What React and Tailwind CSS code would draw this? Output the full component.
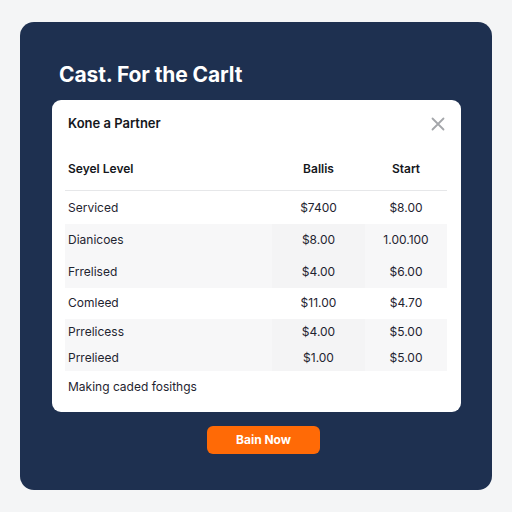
import React from 'react'

const rows = [
  { name: 'Serviced', a: '$7400', b: '$8.00' },
  { name: 'Dianicoes', a: '$8.00', b: '1.00.100' },
  { name: 'Frrelised', a: '$4.00', b: '$6.00' },
  { name: 'Comleed', a: '$11.00', b: '$4.70' },
]

const tight = [
  { name: 'Prrelicess', a: '$4.00', b: '$5.00' },
  { name: 'Prrelieed', a: '$1.00', b: '$5.00' },
]

function Row({ r, h, shaded, extra = '' }) {
  return (
    <div className={`grid grid-cols-[207px_93px_82px] items-center text-[12px] text-[#1f2430] ${h} ${extra}`}>
      <span className="pl-[3px]">{r.name}</span>
      <span className={`text-center h-full flex items-center justify-center ${shaded ? 'bg-[#f4f4f5]' : ''}`}>{r.a}</span>
      <span className="text-center">{r.b}</span>
    </div>
  )
}

export default function App() {
  return (
    <div className="w-[512px] h-[512px] bg-[#f4f5f6] pt-[22px] pl-[20px]" style={{ fontFamily: 'Inter, "Open Sans", sans-serif' }}>
      <div className="w-[472px] h-[468px] rounded-[14px] bg-[#1e3050] pt-[42px] px-[32px] flex flex-col">
        <h1 className="text-white text-[21px] font-bold leading-none tracking-[-0.1px] pl-[7px]">Cast. For the Carlt</h1>

        <div className="mt-[15px] w-[409px] h-[312px] bg-white rounded-[9px] pt-[14px] pl-[13px] pr-[14px] flex flex-col">
          <div className="flex items-center justify-between pl-[3px]">
            <span className="text-[13px] font-semibold text-[#15171c]">Kone a Partner</span>
            <svg width="14" height="14" viewBox="0 0 14 14" className="mr-[2px]">
              <path d="M1.5 1.5 L12.5 12.5 M12.5 1.5 L1.5 12.5" stroke="#a4a6aa" strokeWidth="1.8" strokeLinecap="round" />
            </svg>
          </div>

          <div className="mt-[15px] grid grid-cols-[207px_93px_82px] items-center text-[12px] font-semibold text-[#15171c] h-[42px] border-b border-[#e6e7e9]">
            <span className="pl-[3px]">Seyel Level</span>
            <span className="text-center">Ballis</span>
            <span className="text-center">Start</span>
          </div>

          <Row r={rows[0]} h="h-[33px]" extra="pt-[2px]" />
          <div className="bg-[#f7f7f8]">
            <Row r={rows[1]} h="h-[32px]" shaded />
            <Row r={rows[2]} h="h-[32px]" shaded />
          </div>
          <Row r={rows[3]} h="h-[31px]" />
          <div className="bg-[#f7f7f8]">
            <Row r={tight[0]} h="h-[26px]" shaded />
            <Row r={tight[1]} h="h-[26px]" shaded />
          </div>

          <p className="mt-[7px] pl-[3px] text-[12px] text-[#1f2430]">Making caded fosithgs</p>
        </div>

        <div className="flex justify-center mt-[14px] pl-[15px]">
          <button className="w-[113px] h-[28px] rounded-[6px] bg-[#ff6a06] text-white text-[12px] font-bold">Bain Now</button>
        </div>
      </div>
    </div>
  )
}
